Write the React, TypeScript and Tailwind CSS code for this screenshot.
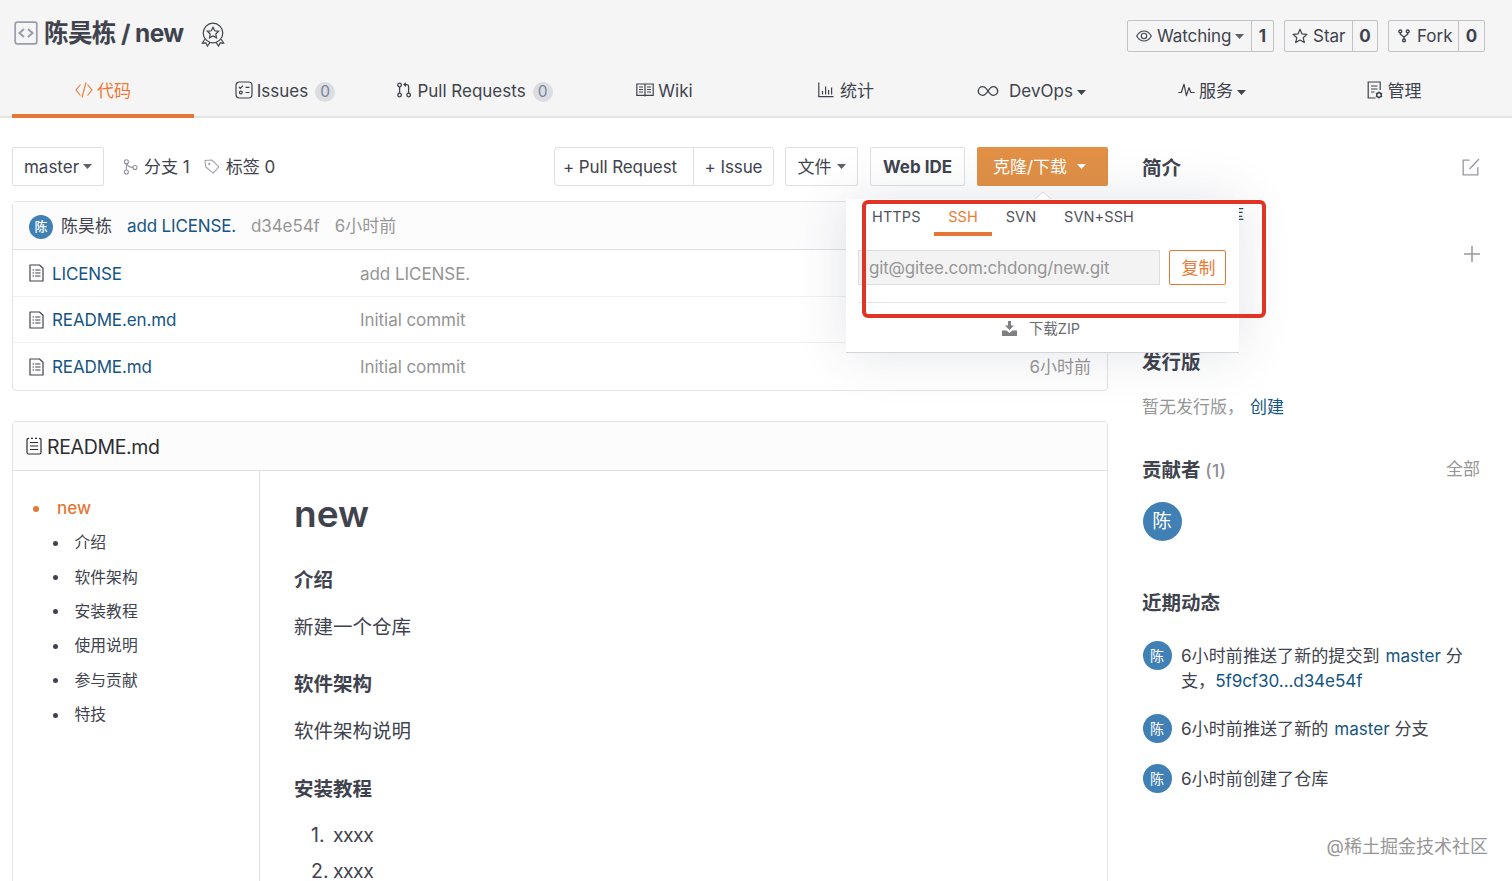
import type { ReactNode } from 'react';
import clsx from 'clsx';

interface IconProps {
  className?: string;
}

interface SvgProps extends IconProps {
  w: number;
  h: number;
  sw?: number;
  children: ReactNode;
}

// Every icon is drawn on a grid of its own pixel size
const Svg = ({ w, h, sw = 1.2, className, children }: SvgProps) => (
  <svg
    width={w}
    height={h}
    viewBox={`0 0 ${w} ${h}`}
    fill="none"
    stroke="currentColor"
    strokeWidth={sw}
    className={clsx('shrink-0', className)}
  >
    {children}
  </svg>
);

const RepoIcon = ({ className }: IconProps) => (
  <Svg w={24} h={24} sw={1.7} className={className}>
    <rect x="1.2" y="1.2" width="21.6" height="21.6" rx="2" />
    <path d="M10 8l-4.500 4 4.500 4M14 8l4.500 4-4.500 4" strokeWidth="2" />
  </Svg>
);

const MedalIcon = ({ className }: IconProps) => (
  <Svg w={24} h={26} sw={1.2} className={className}>
    <circle cx="12" cy="11" r="9.8" />
    <path d="M12 5.3l1.7 3.5 3.9.5-2.8 2.7.7 3.9-3.5-1.9-3.5 1.9.7-3.9-2.8-2.7 3.9-.5z" />
    <path d="M3.8 17.2L1.4 21l3.4-.2 1.6 3.2 2.8-3.8M20.2 17.2l2.4 3.8-3.4-.2-1.6 3.2-2.8-3.8" />
  </Svg>
);

const CodeIcon = ({ className }: IconProps) => (
  <Svg w={18} h={16} sw={1.1} className={className}>
    <path d="M5.500 2.500L1 8l4.500 5.500M12.500 2.500L17 8l-4.500 5.500M11 .5L7 15.500" />
  </Svg>
);

const IssuesIcon = ({ className }: IconProps) => (
  <Svg w={18} h={18} sw={1.2} className={className}>
    <rect x="1" y="1" width="16" height="16" rx="3.500" />
    <path d="M4 6l1.3 1.3L8 4.6M10.5 6.3h4M10.5 11.5h4" />
    <circle cx="5.8" cy="11.5" r="1.4" />
  </Svg>
);

const PullIcon = ({ className }: IconProps) => (
  <Svg w={14} h={16} sw={1.3} className={className}>
    <circle cx="2.6" cy="3" r="1.8" />
    <circle cx="2.6" cy="13" r="1.8" />
    <circle cx="11.6" cy="13" r="1.8" />
    <path d="M2.6 4.8v6.4M11.6 11.2V4.6q0-2-2-2H7" />
    <path d="M9 .3v4.6L6 2.6z" fill="currentColor" stroke="none" />
  </Svg>
);

const WikiIcon = ({ className }: IconProps) => (
  <Svg w={18} h={14} className={className}>
    <path d="M.8 1h16.4v11.4H.8zM9 1v12.5M3 4h4M3 6.5h4M3 9h4M11 4h4M11 6.5h4M11 9h4" />
  </Svg>
);

const ChartIcon = ({ className }: IconProps) => (
  <Svg w={16} h={16} className={className}>
    <path d="M.8.5v14.2h14.7M4.5 12.5V9M7.6 12.5V4.5M10.6 12.5V8M13.6 12.5v-7" />
  </Svg>
);

const InfinityIcon = ({ className }: IconProps) => (
  <Svg w={22} h={12} sw={1.4} className={className}>
    <path d="M11 6C9.5 3.6 8 1.6 5.7 1.6a4.4 4.4 0 0 0 0 8.8C8 10.4 9.5 8.4 11 6s3-4.4 5.3-4.4a4.4 4.4 0 0 1 0 8.8C14 10.4 12.5 8.4 11 6z" />
  </Svg>
);

const PulseIcon = ({ className }: IconProps) => (
  <Svg w={17} h={14} sw={1.2} className={className}>
    <path d="M.3 9.5h3L6 1.2l2.4 11.4L11 4.6l1.9 4.9h3.8" strokeLinejoin="round" />
  </Svg>
);

const ManageIcon = ({ className }: IconProps) => (
  <Svg w={16} h={18} sw={1.2} className={className}>
    <path d="M8.5 17H1.2V1h12v8M4 5h6.5M4 8h6.5M4 11h3.5" />
    <circle cx="12" cy="14" r="2.3" strokeWidth="1.5" />
    <path d="M12 10.4v1.4M12 16.2v1.4M8.9 12.2l1.2.7M13.9 15.1l1.2.7M8.9 15.8l1.2-.7M13.9 12.9l1.2-.7" />
  </Svg>
);

const EyeIcon = ({ className }: IconProps) => (
  <Svg w={16} h={12} sw={1.1} className={className}>
    <path d="M.7 6Q3.5 1 8 1t7.3 5Q12.500 11 8 11T.7 6z" />
    <circle cx="8" cy="6" r="2.7" />
  </Svg>
);

const StarIcon = ({ className }: IconProps) => (
  <Svg w={16} h={16} className={className}>
    <path d="M8 1.300l2 4.600 4.900.500-3.700 3.300 1.100 4.900L8 12.100l-4.300 2.500 1.100-4.900L1.100 6.400 6 5.900z" strokeLinejoin="round" />
  </Svg>
);

const ForkIcon = ({ className }: IconProps) => (
  <Svg w={12} h={14} sw={1.4} className={className}>
    <circle cx="2.300" cy="2.400" r="1.400" />
    <circle cx="9.700" cy="2.400" r="1.400" />
    <circle cx="6" cy="11.400" r="1.400" />
    <path d="M2.300 3.800v1.400L6 8v2M9.700 3.800v1.400L6 8" />
  </Svg>
);

const BranchIcon = ({ className }: IconProps) => (
  <Svg w={15} h={16} sw={1.100} className={className}>
    <circle cx="3.400" cy="2.800" r="2" />
    <circle cx="3.400" cy="13" r="2" />
    <circle cx="12" cy="8.500" r="2" />
    <path d="M3.400 4.800V11M3.800 5q1.500 3.200 6.200 3.400" />
  </Svg>
);

const TagIcon = ({ className }: IconProps) => (
  <Svg w={16} h={16} sw={1.100} className={className}>
    <path d="M1 1.500L7.800 1l7 6.800-5.600 6.400L1.800 8z" strokeLinejoin="round" />
    <circle cx="5.300" cy="5" r=".6" fill="currentColor" />
  </Svg>
);

const FileIcon = ({ className }: IconProps) => (
  <Svg w={15} h={18} sw={1.200} className={className}>
    <path d="M1 1h9.500L14 4.300V17H1z" strokeLinejoin="round" />
    <path d="M3.500 6h1.500M3.500 9h1.500M3.500 12h1.500M6.200 6h5.300M6.200 9h5.300M6.200 12h5.300" />
  </Svg>
);

const ReadmeIcon = ({ className }: IconProps) => (
  <Svg w={16} h={18} sw={1.200} className={className}>
    <path d="M3 1.300Q1 1.300 1 3v12.500Q1 17 2.500 17h11q1.500 0 1.500-1.500V3q0-1.700-2-1.700M5 1.300h2M9 1.300h2M4 5.500h8M4 9h8M4 12.500h8" />
  </Svg>
);

const EditIcon = ({ className }: IconProps) => (
  <Svg w={18} h={18} sw={1.300} className={className}>
    <path d="M7.500 2.200H1.200v14.600h14.600V9.200M7.500 11L17 1" />
  </Svg>
);

const DownloadIcon = ({ className }: IconProps) => (
  <svg width="15" height="15" viewBox="0 0 15 15" fill="currentColor" className={className}>
    <path d="M6 0h3v4.500h3L7.500 9 3 4.500h3z" />
    <path d="M0 9.500h4.500L7.500 12l3-2.500H15V15H0z" />
  </svg>
);

const Caret = ({ className }: IconProps) => (
  <svg width="9" height="5" viewBox="0 0 9 5" fill="currentColor" className={clsx('shrink-0', className)}>
    <path d="M0 0h9L4.500 5z" />
  </svg>
);

const Avatar = ({ className }: IconProps) => (
  <span className={clsx('flex shrink-0 items-center justify-center rounded-full bg-[#4080b5] text-white', className)}>
    陈
  </span>
);

const tabs = [
  { label: '代码', icon: <CodeIcon className="mr-1 -mt-1" />, width: 'w-[182px]', active: true },
  { label: 'Issues', icon: <IssuesIcon className="mr-1 -mt-1" />, width: 'w-[182px]', count: 0 },
  { label: 'Pull Requests', icon: <PullIcon className="mr-1.5 -mt-1" />, width: 'w-[198px]', count: 0 },
  { label: 'Wiki', icon: <WikiIcon className="mr-1 -mt-1" />, width: 'w-[181px]' },
  { label: '统计', icon: <ChartIcon className="mr-1.5 -mt-1" />, width: 'w-[182px]' },
  { label: 'DevOps', icon: <InfinityIcon className="mr-2.5 -mt-0.5" />, width: 'w-[189px]', caret: true },
  { label: '服务', icon: <PulseIcon className="mr-1 -mt-1" />, width: 'w-[172px]', caret: true },
  { label: '管理', icon: <ManageIcon className="mr-[5px] -mt-1" />, width: 'w-[192px]' },
];

const files = [
  { name: 'LICENSE', message: 'add LICENSE.' },
  { name: 'README.en.md', message: 'Initial commit' },
  { name: 'README.md', message: 'Initial commit', time: '6小时前' },
];

const toc = ['介绍', '软件架构', '安装教程', '使用说明', '参与贡献', '特技'];

const Header = () => (
  <header className="h-[118px] border-b-2 border-[#e4e4e5] bg-[#f5f5f5]">
    <div className="flex h-[66px] items-start pl-3.5 pr-[27px]">
      <RepoIcon className="mt-[21px] text-[#9a9dab]" />
      <h1 className="ml-1.5 mt-[17px] w-[140px] whitespace-nowrap text-[24.500px] font-bold leading-8 tracking-[-0.6px]">
        陈昊栋 / new
      </h1>
      <MedalIcon className="ml-[17px] mt-[22px]" />
      <div className="ml-auto mt-5 flex gap-2.5">
        <div className="flex h-8 w-[147px] items-center rounded-xs border border-[#c2c3c6]">
          <div className="flex flex-1 items-center pl-2">
            <EyeIcon className="mr-[5px]" />
            <span className="pt-0.5 tracking-[-0.1px]">Watching</span>
            <Caret className="ml-1 text-[#5d6069]" />
          </div>
          <span className="flex h-full w-[22px] items-center justify-center border-l border-[#c2c3c6] pt-0.5 font-bold">1</span>
        </div>
        <div className="flex h-8 w-[94px] items-center rounded-xs border border-[#c2c3c6]">
          <div className="flex flex-1 items-center pl-[7px]">
            <StarIcon className="mr-[5px]" />
            <span className="pt-0.5">Star</span>
          </div>
          <span className="flex h-full w-[25px] items-center justify-center border-l border-[#c2c3c6] pt-0.5 font-bold">0</span>
        </div>
        <div className="flex h-8 w-[97px] items-center rounded-xs border border-[#c2c3c6]">
          <div className="flex flex-1 items-center pl-[9px]">
            <ForkIcon className="mr-[7px]" />
            <span className="pt-0.5">Fork</span>
          </div>
          <span className="flex h-full w-[26px] items-center justify-center border-l border-[#c2c3c6] pt-0.5 font-bold">0</span>
        </div>
      </div>
    </div>
    <nav className="flex h-[52px] pl-3">
      {tabs.map((tab) => (
        <div
          key={tab.label}
          className={clsx(
            'flex items-center justify-center whitespace-nowrap border-b-4 pt-1',
            tab.width,
            tab.active ? 'border-[#e47836] text-[#ec7a35]' : 'border-transparent',
          )}
        >
          {tab.icon}
          {tab.label}
          {tab.count !== undefined && (
            <span className="ml-[7px] flex h-5 min-w-5 items-center justify-center rounded-full bg-[#dcdde0] text-[15.500px] text-[#7783a0]">
              {tab.count}
            </span>
          )}
          {tab.caret && <Caret className="ml-1" />}
        </div>
      ))}
    </nav>
  </header>
);

const Toolbar = () => (
  <div className="flex h-[39px] shrink-0 items-center whitespace-nowrap">
    <button className="flex h-full w-[92px] items-center justify-center rounded-xs border border-[#dedfe3]">
      <span className="pt-0.5">master</span>
      <Caret className="ml-1 text-[#5d6069]" />
    </button>
    <BranchIcon className="ml-[19px] text-[#8f929a]" />
    <span className="ml-1.5 pt-0.5">分支 1</span>
    <TagIcon className="ml-[14px] text-[#a2a4aa]" />
    <span className="ml-1.5 pt-0.5">标签 0</span>
    <div className="ml-auto flex h-full w-[220px] rounded-sm border border-[#dedfe3]">
      <button className="w-[139px] border-r border-[#dedfe3] pr-2 pt-0.5 tracking-[-0.1px]">+ Pull Request</button>
      <button className="flex-1 pt-0.5 tracking-[-0.1px]">+ Issue</button>
    </div>
    <button className="ml-[11px] flex h-full w-[73px] items-center justify-center rounded-xs border border-[#dedfe3]">
      <span className="pt-0.5">文件</span>
      <Caret className="ml-[5px] text-[#5d6069]" />
    </button>
    <button className="ml-3 h-full w-[95px] rounded-xs border border-[#dedfe3] pt-0.5 font-bold">Web IDE</button>
    <button className="ml-3 flex h-full w-[131px] items-center justify-center rounded-xs bg-[#e19046] pr-1.5 text-white">
      <span className="pt-0.5">克隆/下载</span>
      <Caret className="ml-2.5" />
    </button>
  </div>
);

const FileList = () => (
  <div className="mt-[15px] shrink-0 rounded border border-[#e2e3e6]">
    <div className="flex h-12 items-center whitespace-nowrap border-b border-[#dedfe3] bg-[#fcfcfd] pl-4">
      <Avatar className="mt-0.5 size-6 text-[13px] font-medium" />
      <span className="ml-2 pt-0.5">陈昊栋</span>
      <span className="ml-[15px] pt-0.5 tracking-[-0.15px] text-[#155583]">add LICENSE.</span>
      <span className="ml-[15px] pt-0.5 tracking-[-0.1px] text-[#969696]">d34e54f</span>
      <span className="ml-[15px] pt-0.5 text-[#969696]">6小时前</span>
    </div>
    {files.map((file) => (
      <div key={file.name} className="flex h-[46.700px] items-center border-b border-[#f0f0f2] pl-4 last:border-b-0">
        <FileIcon className="mr-2" />
        <span className="w-[308px] pt-[3px] tracking-[-0.13px] text-[#155583]">{file.name}</span>
        <span className="pt-[3px] tracking-[-0.05px] text-[#949494]">{file.message}</span>
        <span className="ml-auto mr-4 pt-[3px] text-[#969696]">{file.time}</span>
      </div>
    ))}
  </div>
);

const Readme = () => (
  <div className="mt-[30px] shrink-0 rounded-t border border-b-0 border-[#e2e3e6]">
    <div className="flex h-[49px] items-center border-b border-[#dedfe3] bg-[#fcfcfd] pl-[13px] text-[19.500px] text-[#2c2d33]">
      <ReadmeIcon className="mr-[5px]" />
      <span className="mt-[3px] tracking-[-0.35px]">README.md</span>
    </div>
    <div className="flex h-[412px]">
      <ul className="w-[247px] border-r border-[#dedfe3] pt-[20.500px]">
        <li className="flex h-[34.400px] items-center pl-5 font-medium text-[#e47836]">
          <span className="mr-[18px] size-1.5 rounded-full bg-[#e47836]" />
          new
        </li>
        {toc.map((item) => (
          <li key={item} className="flex h-[34.400px] items-center pl-10 text-[15.800px]">
            <span className="mr-[16.500px] size-[5px] rounded-full bg-[#40434d]" />
            {item}
          </li>
        ))}
      </ul>
      <article className="flex-1 pl-[34px] text-[19.500px]">
        <h2 className="mt-[18px] text-[37px] font-semibold leading-[50px]">new</h2>
        <h4 className="mt-[26px] font-bold leading-[30px]">介绍</h4>
        <p className="mt-[17px] leading-[30px]">新建一个仓库</p>
        <h4 className="mt-[27px] font-bold leading-[30px]">软件架构</h4>
        <p className="mt-[17px] leading-[30px]">软件架构说明</p>
        <h4 className="mt-[27.500px] font-bold leading-[30px]">安装教程</h4>
        <ol className="mt-[14.500px] pl-[17px] leading-[35.500px]">
          <li className="flex">
            <span className="w-[22px]">1.</span>
            <span className="tracking-[-0.6px]">xxxx</span>
          </li>
          <li className="flex">
            <span className="w-[22px]">2.</span>
            <span className="tracking-[-0.6px]">xxxx</span>
          </li>
        </ol>
      </article>
    </div>
  </div>
);

const ClonePopup = () => (
  <div className="absolute left-[846px] top-[199px] h-[154px] w-[393px] border-b border-[#d5d6da] bg-white shadow-[0_0_50px_rgba(60,65,90,0.14)]">
    <svg width="16" height="8" viewBox="0 0 16 8" className="absolute -top-2 left-[189px] fill-white stroke-[#d4d5d9]">
      <path d="M0 8l8-7 8 7" />
    </svg>
    <div className="flex h-[37px] pl-[13px] text-[14.500px] leading-9 tracking-[0.1px] text-[#50535c]">
      <span className="w-[75px] pl-[13px]">HTTPS</span>
      <span className="w-[58px] border-b-4 border-[#e47836] text-center text-[#ec7a35]">SSH</span>
      <span className="w-[58px] text-center">SVN</span>
      <span className="pl-3.5">SVN+SSH</span>
    </div>
    <div className="ml-3 mt-3.5 flex h-[35px] w-[368px] justify-between">
      <div className="flex w-[302px] items-center border border-[#dcdddd] bg-[#f3f3f3] pl-2.5 pt-0.5 tracking-[-0.17px] text-[#979797]">
        git@gitee.com:chdong/new.git
      </div>
      <button className="w-[57px] rounded-xs border-[1.500px] border-[#e47836] pl-0.5 pt-0.5 text-[#ec7a35]">复制</button>
    </div>
    <div className="ml-3 mt-[17px] flex w-[368px] justify-center border-t border-[#e6e6e8] pr-0.5 pt-4 text-[14.500px] leading-5 text-[#6b6d73]">
      <DownloadIcon className="mr-3 mt-0.5 text-[#7e7f83]" />
      下载ZIP
    </div>
  </div>
);

const Sidebar = () => (
  <aside className="ml-[34px] w-[338px] pt-1.5">
    <div className="flex h-[30px] items-center justify-between">
      <h3 className="pt-px text-[19.500px] font-bold">简介</h3>
      <EditIcon className="-mt-0.5 text-[#96989e]" />
    </div>
    <p className="mt-5 leading-6">新建一个仓库</p>
    <div className="mt-[19px] flex h-4 justify-end">
      <Svg w={16} h={16} sw={1.5} className="text-[#96989e]">
        <path d="M8 0v16M0 8h16" />
      </Svg>
    </div>
    <h3 className="mt-[85px] text-[19.500px] font-bold leading-[30px]">发行版</h3>
    <p className="mt-[17px] leading-[26px] text-[#969696]">
      暂无发行版，<span className="ml-1.5 text-[#155583]">创建</span>
    </p>
    <div className="mt-[35px] flex h-[30px] items-center justify-between">
      <h3 className="pt-0.5 text-[19.500px] font-bold">
        贡献者 <span className="text-[17.500px] font-medium tracking-[0.3px] text-[#8c8e94]">(1)</span>
      </h3>
      <span className="text-[#969696]">全部</span>
    </div>
    <Avatar className="ml-[0.500px] mt-[17px] size-[39px] text-[19.500px]" />
    <h3 className="mt-[47px] text-[19.500px] font-bold leading-[30px]">近期动态</h3>
    <ul className="mt-[22px] flex flex-col gap-[20px] whitespace-nowrap text-[17.100px] leading-[24.500px]">
      <li className="flex">
        <Avatar className="mr-[9.500px] ml-[0.500px] mt-px size-[29px] text-sm" />
        <p className="pt-1">
          6小时前推送了新的提交到 <span className="ml-px text-[#155583]">master</span> 分
          <br />
          支，<span className="tracking-[-0.1px] text-[#155583]">5f9cf30...d34e54f</span>
        </p>
      </li>
      <li className="flex">
        <Avatar className="mr-[9.500px] ml-[0.500px] mt-px size-[29px] text-sm" />
        <p className="pt-1">
          6小时前推送了新的 <span className="ml-px text-[#155583]">master</span> 分支
        </p>
      </li>
      <li className="flex">
        <Avatar className="mr-[9.500px] ml-[0.500px] mt-px size-[29px] text-sm" />
        <p className="pt-1">6小时前创建了仓库</p>
      </li>
    </ul>
  </aside>
);

const App = () => {
  return (
    <div className="relative h-[881px] w-[1512px] overflow-hidden bg-white font-['Inter','Noto_Sans_CJK_SC',sans-serif] text-[17px] text-[#40434d]">
      <Header />
      <main className="flex h-[763px] overflow-hidden pl-3 pt-[29px]">
        <div className="flex w-[1096px] flex-col">
          <Toolbar />
          <FileList />
          <Readme />
        </div>
        <Sidebar />
      </main>
      <ClonePopup />
      {/* highlight frame around the clone address */}
      <div className="pointer-events-none absolute left-[862px] top-[200px] h-[118px] w-[404px] rounded-md border-4 border-[#e03524]" />
      <div className="absolute bottom-[21px] right-6 text-[18px] leading-[26px] text-[#969696] [text-shadow:0_0_1px_#fff]">
        @稀土掘金技术社区
      </div>
    </div>
  );
};

export default App;
